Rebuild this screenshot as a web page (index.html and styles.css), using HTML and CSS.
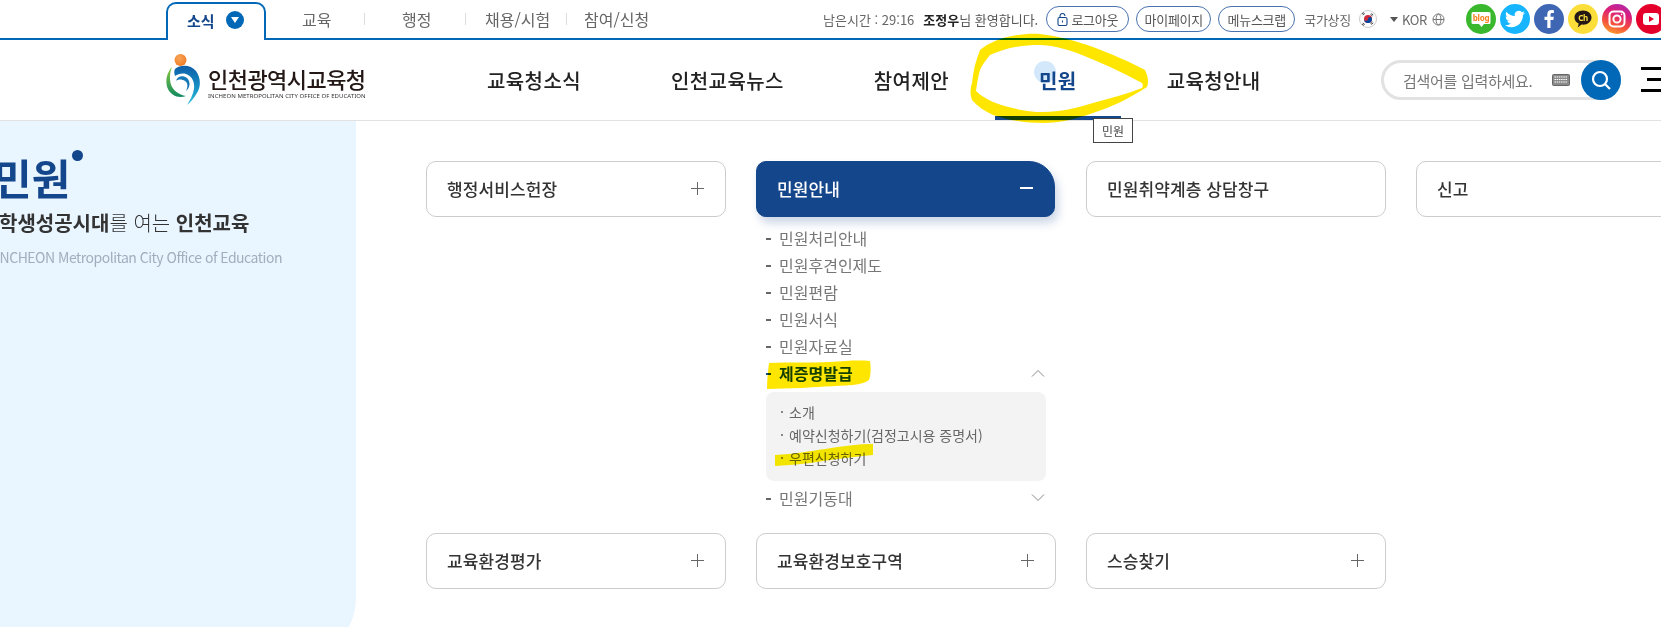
FILE: index.html
```html
<!DOCTYPE html>
<html lang="ko">
<head>
<meta charset="utf-8">
<title>민원 - 인천광역시교육청</title>
<link rel="stylesheet" href="styles.css">
</head>
<body>
<div class="page">
  <div class="topbar">
    <ul class="tabs">
      <li class="tab on"><span>소식</span><i class="tab-dot"><svg width="8" height="6" viewBox="0 0 8 6"><path d="M0 0h8L4 6z" fill="#fff"/></svg></i></li>
      <li class="tab t1">교육</li>
      <li class="tab t2">행정</li>
      <li class="tab t3">채용/시험</li>
      <li class="tab t4">참여/신청</li>
    </ul>
    <div class="util">
      <span class="timer">남은시간 : 29:16</span>
      <span class="welcome"><b>조정우</b>님 환영합니다.</span>
      <a class="pill pill-login"><svg width="11" height="13" viewBox="0 0 11 13" fill="none" stroke="#14468c" stroke-width="1.1"><rect x="1" y="4.5" width="9" height="8" rx="1.5"/><path d="M3 4.5V3a2.5 2.5 0 0 1 5 0"/><path d="M5.5 7.5v2"/></svg>로그아웃</a>
      <a class="pill pill-my">마이페이지</a>
      <a class="pill pill-scrap">메뉴스크랩</a>
      <span class="symbol">국가상징</span>
      <span class="flag"><svg width="18" height="18" viewBox="0 0 18 18"><circle cx="9" cy="9" r="8.5" fill="#fff" stroke="#ccc"/><circle cx="9" cy="9" r="4" fill="#cd2e3a"/><path d="M5 9a4 4 0 0 0 8 0a2 2 0 0 0-4 0a2 2 0 0 1-4 0z" fill="#0047a0"/><path d="M3 4l2-1.5M3.8 5l2-1.5M12.2 3.5l2 1.5M11.5 4.5l2 1.5M3 14l2 1.5M3.8 13l2 1.5M12.2 14.5l2-1.5M11.5 13.5l2-1.5" stroke="#222" stroke-width=".8"/></svg></span>
      <span class="lang"><i class="lang-arrow"></i>KOR<svg width="13" height="13" viewBox="0 0 13 13" fill="none" stroke="#777"><circle cx="6.5" cy="6.5" r="5.5"/><ellipse cx="6.5" cy="6.5" rx="2.4" ry="5.5"/><path d="M1 6.5h11"/></svg></span>
      <div class="social">
        <span class="sns sns-blog"><svg width="30" height="30" viewBox="0 0 30 30"><path d="M7 8h16a1.500 1.500 0 0 1 1.500 1.500v9A1.500 1.500 0 0 1 23 20h-5l-2.500 3-2.500-3H7a1.500 1.500 0 0 1-1.500-1.500v-9A1.500 1.500 0 0 1 7 8z" fill="#fff"/><text x="15" y="17" class="blog-t">blog</text></svg></span>
        <span class="sns sns-tw"><svg width="20" height="20" viewBox="0 0 24 24"><path fill="#fff" d="M23.953 4.570a10 10 0 0 1-2.825.775 4.958 4.958 0 0 0 2.163-2.723c-.951.555-2.005.959-3.127 1.184a4.920 4.920 0 0 0-8.384 4.482C7.690 8.095 4.067 6.130 1.640 3.162a4.822 4.822 0 0 0-.666 2.475c0 1.710.870 3.213 2.188 4.096a4.904 4.904 0 0 1-2.228-.616v.060a4.923 4.923 0 0 0 3.946 4.827 4.996 4.996 0 0 1-2.212.085 4.936 4.936 0 0 0 4.604 3.417 9.867 9.867 0 0 1-6.102 2.105c-.390 0-.779-.023-1.170-.067a13.995 13.995 0 0 0 7.557 2.209c9.053 0 13.998-7.496 13.998-14.020 0-.210 0-.420-.015-.630A9.935 9.935 0 0 0 24 4.590z"/></svg></span>
        <span class="sns sns-fb"><svg width="30" height="30" viewBox="0 0 30 30"><path fill="#fff" d="M16.500 24v-8h2.800l.5-3.300h-3.300v-2c0-1 .4-1.600 1.700-1.600h1.700V6.200c-.5-.1-1.400-.2-2.400-.2-2.600 0-4.200 1.500-4.200 4.300v2.400H10.500V16h2.800v8z"/></svg></span>
        <span class="sns sns-ch"><svg width="30" height="30" viewBox="0 0 30 30"><path d="M15 6.500c-5 0-8.500 3-8.500 7 0 2.700 1.700 5 4.200 6.100l-.9 4 3.700-3c.5.100 1 .100 1.500.100 5 0 8.500-3.200 8.500-7.200s-3.500-7-8.500-7z" fill="#231815"/><text x="15" y="16.500" class="ch-t">Ch</text></svg></span>
        <span class="sns sns-ig"><svg width="30" height="30" viewBox="0 0 30 30" fill="none" stroke="#fff" stroke-width="2"><rect x="7.500" y="7.500" width="15" height="15" rx="4"/><circle cx="15" cy="15" r="3.600"/><circle cx="19.600" cy="10.400" r=".8" fill="#fff" stroke="none"/></svg></span>
        <span class="sns sns-yt"><svg width="30" height="30" viewBox="0 0 30 30"><rect x="7" y="9" width="16" height="12" rx="3" fill="#fff"/><path d="M13 12l5 3-5 3z" fill="#e4002b"/></svg></span>
      </div>
    </div>
  </div>

  <header class="header">
    <a class="logo">
      <svg class="logo-mark" width="36" height="52" viewBox="0 0 36 52">
        <defs>
          <linearGradient id="lg1" x1="0" y1="0" x2="0" y2="1"><stop offset="0" stop-color="#8dc63f"/><stop offset="1" stop-color="#0f8a5f"/></linearGradient>
          <linearGradient id="lg2" x1="0" y1="0" x2="0" y2="1"><stop offset="0" stop-color="#0d5da8"/><stop offset=".6" stop-color="#1796c8"/><stop offset="1" stop-color="#35c0d8"/></linearGradient>
          <radialGradient id="lg3" cx=".4" cy=".35" r=".7"><stop offset="0" stop-color="#f9a65a"/><stop offset="1" stop-color="#ee7a22"/></radialGradient>
        </defs>
        <circle cx="15.500" cy="6" r="6" fill="url(#lg3)"/>
        <path d="M7 13C2 18-.5 28 3 35C6 41 13 45 21 42C14 41 7 36 5.500 29C4.500 23 5 18 7 13Z" fill="url(#lg1)"/>
        <path d="M10 15C16 10 26 11 31 17C36 24 36 33 32 39C29 44 26 48 22 51C25 46 28 41 29 35C30 28 27 22 21 20C17 19 13 20 10 22C9 19 9 17 10 15Z" fill="url(#lg2)"/>
        <path d="M11 27C12 22 18 21 22 24C26 28 25 34 21 37C23 33 23 29 20 27C17 25 13 25 11 27Z" fill="#1578b8"/>
      </svg>
      <span class="logo-text">
        <strong class="logo-ko">인천광역시교육청</strong>
        <small class="logo-en">INCHEON METROPOLITAN CITY OFFICE OF EDUCATION</small>
      </span>
    </a>
    <nav class="gnb">
      <a class="gnb-item">교육청소식</a>
      <a class="gnb-item">인천교육뉴스</a>
      <a class="gnb-item">참여제안</a>
      <a class="gnb-item active"><i class="hover-dot"></i><span>민원</span></a>
      <a class="gnb-item">교육청안내</a>
    </nav>
    <div class="search">
      <span class="search-ph">검색어를 입력하세요.</span>
      <svg class="kbd" width="18" height="12" viewBox="0 0 18 12"><rect x=".5" y=".5" width="17" height="11" rx="1" fill="#8a8a8a" stroke="#666"/><path d="M2.500 3h13M2.500 5.500h13M2.500 8h13" stroke="#fff" stroke-width="1.200" stroke-dasharray="1.500 .7"/></svg>
      <span class="search-btn"><svg width="24" height="24" viewBox="0 0 24 24" fill="none" stroke="#fff" stroke-width="2.200"><circle cx="11" cy="11" r="7"/><path d="M16 16l5 5"/></svg></span>
    </div>
    <div class="burger"><i></i><i class="short"></i><i></i></div>
  </header>

  <div class="body">
    <aside class="side">
      <div class="side-inner">
        <h1 class="side-title">민원<i class="side-dot"></i></h1>
        <p class="side-sub"><b>학생성공시대</b>를 여는 <b>인천교육</b></p>
        <p class="side-en">INCHEON Metropolitan City Office of Education</p>
      </div>
    </aside>
    <main class="grid">
      <section class="cell"><div class="card">행정서비스헌장<i class="plus"></i></div></section>
      <section class="cell">
        <div class="card open">민원안내<i class="minus"></i></div>
        <ul class="list">
          <li>민원처리안내</li>
          <li>민원후견인제도</li>
          <li>민원편람</li>
          <li>민원서식</li>
          <li>민원자료실</li>
          <li class="current">제증명발급<svg class="chev" width="14" height="8" viewBox="0 0 14 8" fill="none" stroke="#888"><path d="M1 7.500l6-6 6 6"/></svg></li>
          <li class="subwrap">
            <ul class="sub">
              <li>소개</li>
              <li>예약신청하기(검정고시용 증명서)</li>
              <li>우편신청하기</li>
            </ul>
          </li>
          <li>민원기동대<svg class="chev" width="14" height="8" viewBox="0 0 14 8" fill="none" stroke="#888"><path d="M1 .5l6 6 6-6"/></svg></li>
        </ul>
      </section>
      <section class="cell"><div class="card">민원취약계층 상담창구</div></section>
      <section class="cell"><div class="card">신고<i class="plus"></i></div></section>
      <section class="cell"><div class="card">교육환경평가<i class="plus"></i></div></section>
      <section class="cell"><div class="card">교육환경보호구역<i class="plus"></i></div></section>
      <section class="cell"><div class="card">스승찾기<i class="plus"></i></div></section>
    </main>
  </div>

  <div class="tooltip">민원</div>
  <svg class="marks" width="1661" height="627" viewBox="0 0 1661 627">
    <path fill-rule="evenodd" fill="#ffe600" d="M1040 34C1058 36 1076 41 1093 47C1112 54 1130 62 1145 70C1148 76 1149 82 1147 87C1130 98 1112 107 1093 113C1076 119 1060 123 1043 123C1025 123 1008 120 993 115C984 111 977 106 972 100C970 94 970 89 972 83C973 71 976 60 980 50C987 44 995 41 1003 38C1015 35 1028 33 1040 34ZM1040 45C1030 45 1020 46 1010 48C1003 50 996 52 990 55C986 60 982 65 980 70C978 77 977 84 976 91C981 96 987 99 993 102C1009 108 1026 112 1043 112C1060 112 1077 108 1093 103C1110 98 1127 94 1142 88C1143 86 1143 85 1142 83C1122 72 1100 62 1077 53C1065 49 1052 45 1040 45Z"/>
    <path fill="#ffe600" d="M769 363C790 362 810 363 830 362C845 361 858 360 870 361C871 368 871 375 869 380C865 383 860 384 853 385C835 386 815 387 800 388C790 388 778 389 767 389C767 380 768 371 769 363Z"/>
    <path fill="#fff000" d="M775 455C795 454 810 451 825 449C842 446 858 444 873 444L873 455C860 456 845 458 830 460C812 463 795 465 775 466Z"/>
  </svg>
</div>
</body>
</html>
```
FILE: styles.css
```css
* { box-sizing: border-box; margin: 0; padding: 0; }
html, body { width: 1661px; height: 627px; overflow: hidden; background: #fff; }
body { font-family: "Noto Sans CJK KR", "Noto Sans", sans-serif; color: #222; }
ul { list-style: none; }
i { font-style: normal; display: block; }
.page { position: relative; width: 1661px; height: 627px; overflow: hidden; }

/* top bar */
.topbar { height: 40px; border-bottom: 2px solid #0068b7; display: flex; justify-content: space-between; padding-left: 166px; }
.tabs { display: flex; height: 40px; align-items: stretch; }
.tab { font-size: 16px; color: #666; display: flex; align-items: center; line-height: 1; padding-bottom: 2px; position: relative; white-space: nowrap; }
.tab.on { width: 100px; margin-top: 2px; height: 38px; background: #fff; border: 2px solid #0068b7; border-bottom: 0; border-radius: 10px 10px 0 0; padding-left: 19px; gap: 11px; font-size: 15px; font-weight: 700; color: #14468c; padding-bottom: 4px; }
.tab-dot { width: 18px; height: 18px; border-radius: 50%; background: #0068b7; display: flex; align-items: center; justify-content: center; }
.t1 { margin-left: 36px; width: 63px; }
.t2 { margin-left: 37px; width: 64px; }
.t3 { margin-left: 19px; width: 82px; }
.t4 { margin-left: 17px; }
.t1::after, .t2::after, .t3::after { content: ""; position: absolute; right: 0; top: 13px; width: 1px; height: 12px; background: #ddd; }

.util { display: flex; align-items: center; height: 38px; font-size: 13px; color: #666; letter-spacing: -.3px; }
.timer { margin-right: 9px; letter-spacing: 0; white-space: nowrap; }
.welcome { margin-right: 8px; color: #555; letter-spacing: 0; white-space: nowrap; }
.welcome b { color: #222; }
.pill { height: 26px; border: 1px solid #4a72ad; border-radius: 13px; display: flex; align-items: center; justify-content: center; gap: 3px; margin-right: 7px; color: #555; background: #fff; white-space: nowrap; }
.pill-login { width: 83px; }
.pill-my { width: 75px; }
.pill-scrap { width: 77px; margin-right: 9px; }
.symbol { margin-right: 8px; white-space: nowrap; }
.flag { display: flex; margin-right: 13px; }
.lang { display: flex; align-items: center; gap: 5px; margin-right: 21px; }
.lang-arrow { width: 0; height: 0; border: 4px solid transparent; border-top: 5px solid #555; border-bottom: 0; margin-right: -1px; }
.social { display: flex; gap: 4px; width: 195px; flex: none; }
.sns { width: 30px; height: 30px; border-radius: 50%; display: flex; align-items: center; justify-content: center; flex: none; }
.sns-blog { background: #39b82e; }
.sns-tw { background: #17b5ff; }
.sns-fb { background: #3f66b2; }
.sns-ch { background: #fbde3a; }
.sns-ig { background: linear-gradient(20deg, #fdb32b 0%, #f5513c 35%, #dc1f78 65%, #a32cb8 100%); }
.sns-yt { background: #e4002b; }
.blog-t { font: 700 8px "Noto Sans", sans-serif; fill: #f58220; text-anchor: middle; letter-spacing: -.2px; }
.ch-t { font: 700 8px "Noto Sans", sans-serif; fill: #fbde3a; text-anchor: middle; }

/* header */
.header { height: 81px; border-bottom: 1px solid #e2e2e2; display: flex; padding-left: 165px; position: relative; }
.logo { display: flex; width: 278px; flex: none; padding-top: 14px; align-items: flex-start; }
.logo-mark { flex: none; }
.logo-text { display: flex; flex-direction: column; margin-left: 7px; margin-top: 11px; }
.logo-ko { font-size: 22px; font-weight: 500; line-height: 26px; color: #231815; letter-spacing: -.55px; white-space: nowrap; }
.logo-en { font-size: 6px; line-height: 8px; margin-top: 1px; color: #333; font-family: "Noto Sans", sans-serif; white-space: nowrap; letter-spacing: .06px; }
.gnb { display: flex; gap: 2px; flex: none; }
.gnb-item { font-size: 20px; font-weight: 500; letter-spacing: .4px; color: #222; padding: 0 44px; height: 80px; display: flex; align-items: center; position: relative; white-space: nowrap; }
.gnb-item span { position: relative; font-weight: 700; color: #14468c; }
.gnb-item.active::after { content: ""; position: absolute; left: 0; right: 0; bottom: 0; height: 4px; background: #14468c; }
.hover-dot { position: absolute; left: 39px; top: 21px; width: 22px; height: 22px; border-radius: 50%; background: #d3e9fb; }
.search { position: absolute; left: 1381px; top: 20px; width: 240px; height: 40px; border: 3px solid #e2e2e2; border-radius: 20px; display: flex; align-items: center; padding-left: 19px; }
.search-ph { font-size: 15px; color: #777; letter-spacing: -.3px; white-space: nowrap; }
.kbd { margin-left: 20px; flex: none; }
.search-btn { position: absolute; right: -3px; top: -3px; width: 40px; height: 40px; border-radius: 50%; background: #0068b7; display: flex; align-items: center; justify-content: center; }
.burger { position: absolute; left: 1641px; top: 27px; width: 24px; display: flex; flex-direction: column; gap: 8px; align-items: flex-end; }
.burger i { width: 24px; height: 3px; background: #000; }
.burger .short { width: 18px; }

/* body */
.body { display: flex; height: 506px; }
.side { width: 356px; flex: none; height: 539px; background: #e9f5ff; border-radius: 0 0 62px 0; overflow: hidden; }
.side-inner { margin-left: -7px; padding-top: 27px; }
.side-title { font-size: 42px; font-weight: 700; color: #14468c; line-height: 58px; display: inline-block; position: relative; white-space: nowrap; }
.side-dot { position: absolute; right: -13px; top: 2px; width: 11px; height: 11px; border-radius: 50%; background: #14468c; }
.side-sub { font-size: 20px; font-weight: 300; color: #333; line-height: 26px; margin: 4px 0 0 6px; white-space: nowrap; }
.side-sub b { font-weight: 700; }
.side-en { font-size: 14px; color: #a3aebd; line-height: 20px; margin: 11px 0 0 3px; white-space: nowrap; letter-spacing: -.5px; }

.grid { display: grid; grid-template-columns: repeat(4, 300px); grid-auto-rows: min-content; column-gap: 30px; padding: 40px 0 0 70px; flex: none; align-items: start; }
.card { height: 56px; width: 300px; border: 1px solid #ccc; border-radius: 10px; background: #fff; display: flex; align-items: center; justify-content: space-between; padding: 0 21px 2px 20px; font-size: 17px; font-weight: 500; letter-spacing: .1px; color: #333; white-space: nowrap; }
.card.open { width: 299px; background: #14468c; border-color: #14468c; color: #fff; border-radius: 10px 26px 10px 10px; box-shadow: 3px 6px 10px rgba(20, 70, 140, .22); }
.plus { width: 13px; height: 13px; flex: none; background: linear-gradient(#666, #666) center/13px 1px no-repeat, linear-gradient(#666, #666) center/1px 13px no-repeat; }
.minus { width: 13px; height: 1.5px; background: #fff; flex: none; }

.list { padding: 8px 10px 0 10px; height: 316px; }
.list > li { height: 27px; line-height: 27px; font-size: 16px; color: #777; padding-left: 13px; position: relative; white-space: nowrap; }
.list > li:not(.subwrap)::before { content: ""; position: absolute; left: 0; top: 13px; width: 5px; height: 2px; background: #666; }
.list > .current { color: #14468c; font-weight: 700; }
.list > li.current::before { background: #14468c; }
.list > .subwrap { height: auto; padding: 0; margin: 5px 0 4px; }
.chev { position: absolute; right: 1px; top: 9px; }
.sub { background: #f3f3f3; border-radius: 8px; padding: 9px 0 10px 23px; height: 89px; width: 280px; }
.sub li { font-size: 14px; line-height: 23px; color: #666; position: relative; }
.sub li::before { content: ""; position: absolute; left: -8px; top: 10px; width: 2px; height: 2px; background: #888; }

/* overlays */
.tooltip { position: absolute; left: 1093px; top: 118px; width: 40px; height: 25px; border: 1px solid #444; background: #fff; font-size: 12px; line-height: 23px; text-align: center; color: #444; }
.marks { position: absolute; left: 0; top: 0; mix-blend-mode: multiply; pointer-events: none; }
```
